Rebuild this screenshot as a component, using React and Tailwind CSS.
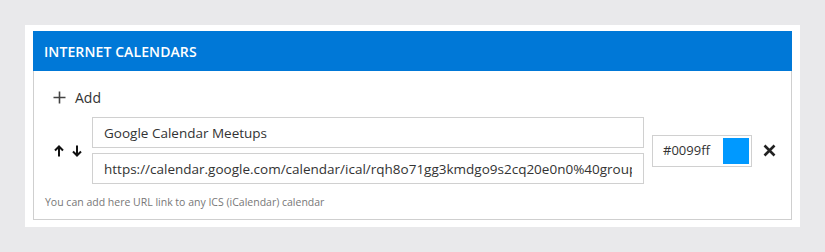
const font = { fontFamily: '"Open Sans", "Noto Sans", sans-serif' };

const Plus = () => (
  <svg width="13" height="13" viewBox="0 0 13 13" className="text-[#444]">
    <path d="M6.5 0.5v12M0.5 6.5h12" stroke="currentColor" strokeWidth="1.6" fill="none" />
  </svg>
);

const ArrowUp = () => (
  <svg width="10" height="12" viewBox="0 0 10 12" className="text-[#111]">
    <path d="M5 11.5V2M1 5.5L5 1.5L9 5.5" stroke="currentColor" strokeWidth="2" fill="none" />
  </svg>
);

const ArrowDown = () => (
  <svg width="10" height="12" viewBox="0 0 10 12" className="text-[#111]">
    <path d="M5 0.5V10M1 6.5L5 10.5L9 6.5" stroke="currentColor" strokeWidth="2" fill="none" />
  </svg>
);

const Cross = () => (
  <svg width="13" height="13" viewBox="0 0 13 13" className="text-[#222]">
    <path d="M1.5 1.5l10 10M11.5 1.5l-10 10" stroke="currentColor" strokeWidth="2.6" fill="none" />
  </svg>
);

export default function App() {
  return (
    <div className="min-h-screen bg-[#e9e9eb] pt-[25px] pl-[25px]" style={font}>
      <div className="w-[775px] h-[202px] bg-white pt-[6px] px-2">
        <div className="h-10 bg-[#0078d7] flex items-center px-[11px]">
          <span className="text-white text-[14px] font-semibold tracking-[0.1px]">INTERNET CALENDARS</span>
        </div>
        <div className="border border-t-0 border-[#cfcfcf] pt-4 pb-[9px]">
          <div className="h-5 flex items-center gap-[9px] pl-[19px] text-[14px] text-[#333]">
            <Plus />
            <span>Add</span>
          </div>
          <div className="mt-[10px] flex items-center">
            <div className="w-[58px] flex items-center gap-[8px] pl-[20px]">
              <ArrowUp />
              <ArrowDown />
            </div>
            <div className="w-[552px] flex flex-col gap-[5px]">
              <input
                readOnly
                value="Google Calendar Meetups"
                className="h-[31px] border border-[#d0d0d0] px-[11px] text-[13.5px] text-[#333] outline-none"
              />
              <input
                readOnly
                value="https://calendar.google.com/calendar/ical/rqh8o71gg3kmdgo9s2cq20e0n0%40group.calendar.google.com/public/basic.ics"
                className="h-[31px] border border-[#d0d0d0] px-[11px] text-[13.5px] text-[#333] outline-none"
              />
            </div>
            <div className="ml-2 w-[100px] h-[32px] border border-[#d0d0d0] flex items-center justify-between pl-[10px] pr-[2px]">
              <span className="text-[13px] text-[#333]">#0099ff</span>
              <div className="w-[26px] h-[26px] bg-[#0099ff]" />
            </div>
            <div className="ml-[11px]">
              <Cross />
            </div>
          </div>
          <div className="mt-[10px] pl-[11px] text-[10.5px] leading-4 text-[#777]">
            You can add here URL link to any ICS (iCalendar) calendar
          </div>
        </div>
      </div>
    </div>
  );
}
